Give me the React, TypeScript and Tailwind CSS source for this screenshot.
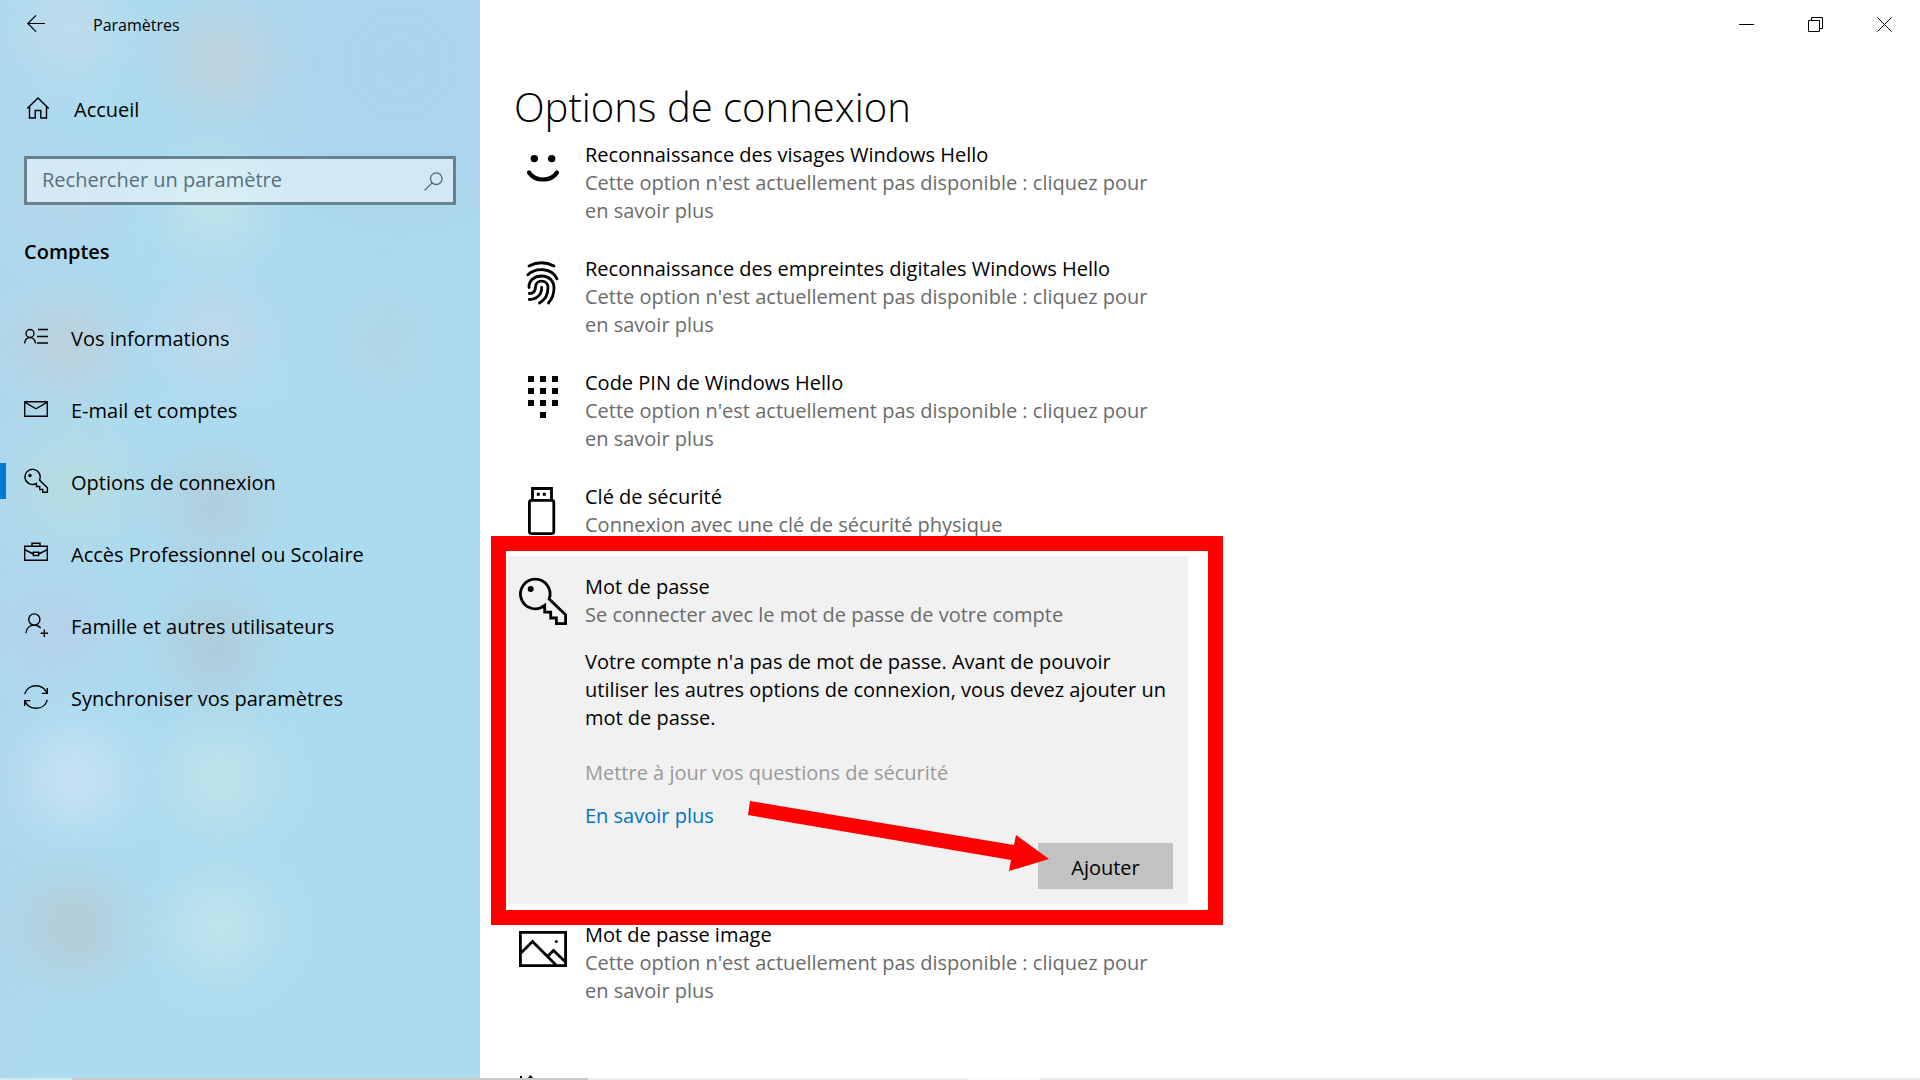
import type { ReactNode } from "react";

type IconProps = { children: ReactNode };

const NavIcon = ({ children }: IconProps) => (
  <svg className="size-6 shrink-0 overflow-visible" viewBox="0 0 24 24" fill="none" stroke="currentColor" strokeWidth="1.4" aria-hidden="true">
    {children}
  </svg>
);

const OptionIcon = ({ children }: IconProps) => (
  <svg className="mt-1 size-12 shrink-0 overflow-visible" viewBox="0 0 48 48" fill="none" stroke="currentColor" strokeWidth="2.8" aria-hidden="true">
    {children}
  </svg>
);

const navItems = [
  {
    label: "Vos informations",
    icon: (
      <>
        <circle cx="6" cy="8.5" r="4" />
        <path d="M.6 18.3C1 15 3 12.6 6 12.6s5 2.4 5.6 5.7M14 4.500h10M13 11.500h11M13 18h11" />
      </>
    ),
  },
  {
    label: "E-mail et comptes",
    icon: <path d="M.7 4.700h22.600v14.600H.7zM.7 5.200l11.300 6.600 11.300-6.600" />,
  },
  {
    label: "Options de connexion",
    selected: true,
    icon: (
      <>
        <path d="M12.500 14.400a7.600 7.600 0 1 1 3-3.400l7.900 7.800v4.500h-4.700v-2.800h-3v-3h-3.200z" />
        <circle cx="6" cy="6.500" r="1" fill="currentColor" />
      </>
    ),
  },
  {
    label: "Accès Professionnel ou Scolaire",
    icon: <path d="M.7 5.300h22.600v14H.7zM8 5V2.300h8V5M.7 8.700 9.300 13M23.300 8.700 14.700 13M9.300 11.300h5.400v3.200H9.300z" />,
  },
  {
    label: "Famille et autres utilisateurs",
    icon: (
      <>
        <circle cx="10.3" cy="6.5" r="5.6" />
        <path d="M1.800 20.100c.7-4.800 4-8 8.500-8 2.700 0 4.900 1.100 6.400 3M20.300 16.600V24M16.600 20.300H24" />
      </>
    ),
  },
  {
    label: "Synchroniser vos paramètres",
    icon: (
      <path d="M.7 9.200C2 4 6.500.7 12 .7c4.700 0 9 2.700 11 7.300M23.300 3v5.400h-5.500M23.300 14.800c-1.300 5.200-5.800 8.500-11.300 8.500-4.700 0-9-2.700-11-7.300M.7 21v-5.400h5.500" />
    ),
  },
];

const unavailable = "Cette option n'est actuellement pas disponible : cliquez pour en savoir plus";

const options = [
  {
    title: "Reconnaissance des visages Windows Hello",
    text: unavailable,
    icon: (
      <>
        <circle cx="15.3" cy="13.6" r="3.7" fill="currentColor" stroke="none" />
        <circle cx="32.7" cy="13.6" r="3.7" fill="currentColor" stroke="none" />
        <path d="M10 27.500c3 4.600 8 7 14 7s11-2.400 14-7" strokeWidth="4.200" strokeLinecap="round" />
      </>
    ),
  },
  {
    title: "Reconnaissance des empreintes digitales Windows Hello",
    text: unavailable,
    icon: (
      <path
        strokeLinecap="round"
        d="M10 7c8-4.200 17-4.200 25 0M8.800 15.800c8-7.500 24-7.300 29.200 4M10 28.500C9.600 21.500 15.500 17 22.500 17 30 17 35 22 35 29c0 6-2 11-5.500 15M10.300 34.500c4.200 0 6.200-2.500 6.200-6.500 0-3.600 2.600-5.800 6-5.800 4 0 6.500 2.500 6.500 6.600C29 35.500 26 41 20.500 44M10.300 40.500C17.500 40.500 22.700 36 22.700 28.500"
      />
    ),
  },
  {
    title: "Code PIN de Windows Hello",
    text: unavailable,
    icon: (
      <path
        fill="currentColor"
        stroke="none"
        d="M9 3h6v6H9zM21 3h6v6h-6zM33 3h6v6h-6zM9 15h6v6H9zM21 15h6v6h-6zM33 15h6v6h-6zM9 27h6v6H9zM21 27h6v6h-6zM33 27h6v6h-6zM21 39h6v6h-6z"
      />
    ),
  },
  {
    title: "Clé de sécurité",
    text: "Connexion avec une clé de sécurité physique",
    icon: (
      <>
        <path d="M13.500 13V1.500h19V13" />
        <rect x="10.400" y="13.400" width="24.400" height="33.200" rx="2" />
        <path d="M17.800 5.800h3v3h-3zM23.800 5.800h3v3h-3z" fill="currentColor" stroke="none" />
      </>
    ),
  },
];

function Option({ title, text, icon }: { title: string; text: string; icon: ReactNode }) {
  return (
    <button type="button" className="flex min-h-[90px] w-full max-w-[681px] items-start gap-[18px] px-3 pt-[17px] pb-[13px] text-left">
      <OptionIcon>{icon}</OptionIcon>
      <span className="flex flex-col">
        <span>{title}</span>
        <span className="text-[#6b6b6b]">{text}</span>
      </span>
    </button>
  );
}

/* Soft colour patches of the desktop that shine through the acrylic panel. */
const glows = [
  "top-[-10px] left-[30px] bg-[#cfdcea]",
  "top-[20px] left-[180px] bg-[#d0d0ce]",
  "top-[165px] left-[175px] bg-[#d0eae6]",
  "top-[160px] left-[30px] bg-[#c0d2e8]",
  "top-[305px] left-[30px] bg-[#cbc8cc]",
  "top-[295px] left-[175px] bg-[#d0d6e8]",
  "top-[445px] left-[35px] bg-[#c4dcd6]",
  "top-[465px] left-[175px] bg-[#b6c4cc]",
  "top-[605px] left-[175px] bg-[#b2c0c8]",
  "top-[590px] left-[25px] bg-[#bccbe6]",
  "top-[738px] left-[35px] bg-[#dfe8f8]",
  "top-[738px] left-[180px] bg-[#d0eae4]",
  "top-[887px] left-[35px] bg-[#bcc0be]",
  "top-[887px] left-[180px] bg-[#d2ece8]",
  "top-[305px] left-[345px] bg-[#b4d2e0]",
];

function Sidebar() {
  return (
    <aside className="relative isolate flex w-1/4 min-w-[420px] flex-col overflow-hidden bg-[#acdbef]">
      <div className="absolute inset-0 -z-10" aria-hidden="true">
        <div className="absolute -top-24 left-60 h-80 w-80 rounded-full bg-[#acd3ec] blur-[60px]" />
        <div className="absolute top-0 -left-16 h-full w-24 bg-[#b0d4ea] opacity-60 blur-[30px]" />
        {glows.map((glow) => (
          <div key={glow} className={`absolute size-20 rounded-full opacity-80 blur-[30px] ${glow}`} />
        ))}
      </div>

      <header className="flex h-12 items-center">
        <button type="button" aria-label="Retour" className="flex h-12 w-[72px] items-center justify-center">
          <svg className="size-[18px] overflow-visible" viewBox="0 0 18 18" fill="none" stroke="currentColor" strokeWidth="1.2" aria-hidden="true">
            <path d="M18 8.500H.8M9 .3.8 8.500 9 16.700" />
          </svg>
        </button>
        <span className="pt-0.5 pl-[21px] text-base">Paramètres</span>
      </header>

      <a href="#accueil" className="mt-9 flex h-12 items-center gap-6 pl-[26px]">
        <NavIcon>
          <path d="M1.300 12.500 12 2l10.700 10.500M3.500 10.800V22h5.700v-7.500h5.600V22h5.700V10.800" />
        </NavIcon>
        <span className="pt-1">Accueil</span>
      </a>

      <div className="relative mx-6 mt-6">
        <input
          type="text"
          aria-label="Rechercher un paramètre"
          placeholder="Rechercher un paramètre"
          className="h-[49px] w-full border-3 border-[#67838f] bg-white/45 pr-12 pb-0.5 pl-[15px] outline-none placeholder:text-[#56707c]"
        />
        <svg className="pointer-events-none absolute top-4 right-[13px] size-[19px]" viewBox="0 0 19 19" fill="none" stroke="#4f6570" strokeWidth="1.3" aria-hidden="true">
          <circle cx="12.300" cy="6.700" r="5.800" />
          <path d="M8.100 10.900.6 18.400" />
        </svg>
      </div>

      <h2 className="mt-[33px] px-6 leading-7 font-semibold">Comptes</h2>

      <nav className="mt-[35px] flex flex-col">
        {navItems.map((item) => (
          <a key={item.label} href="#" aria-current={item.selected ? "page" : undefined} className="relative flex h-[72px] items-center gap-[23px] pl-6">
            {item.selected && <span className="absolute inset-y-[18px] left-0 w-1.5 bg-[#0078d7]" />}
            <NavIcon>{item.icon}</NavIcon>
            <span className="pt-1">{item.label}</span>
          </a>
        ))}
      </nav>
    </aside>
  );
}

function WindowControls() {
  const button = "flex h-12 w-[69px] items-center justify-center";
  const svg = "h-[15px] w-[15px]";
  return (
    <div className="flex h-12 justify-end pr-px">
      <button type="button" aria-label="Réduire" className={button}>
        <svg className={svg} viewBox="0 0 15 15" stroke="currentColor" fill="none">
          <path d="M0 7.500h15" />
        </svg>
      </button>
      <button type="button" aria-label="Restaurer" className={button}>
        <svg className={svg} viewBox="0 0 15 15" stroke="currentColor" fill="none">
          <path d="M.5 3.500h11v11H.5zM3.500 3.500v-3h11v11h-3" />
        </svg>
      </button>
      <button type="button" aria-label="Fermer" className={button}>
        <svg className={svg} viewBox="0 0 15 15" stroke="currentColor" fill="none">
          <path d="m.5.5 14 14M14.500.5l-14 14" />
        </svg>
      </button>
    </div>
  );
}

function PasswordCard() {
  return (
    <section className="relative w-full max-w-[681px] bg-[#f1f1f1]">
      <div className="flex items-start gap-[18px] px-3 pt-[17px]">
        <OptionIcon>
          <path d="M25.700 28.400A14.800 14.800 0 1 1 30.200 22l16.400 15.800v8.800h-9.200V41h-5.700v-5.800h-6z" />
          <circle cx="11.700" cy="12" r="3" fill="currentColor" stroke="none" />
        </OptionIcon>
        <div className="flex flex-col">
          <h2>Mot de passe</h2>
          <p className="text-[#6b6b6b]">Se connecter avec le mot de passe de votre compte</p>
          <p className="mt-[19px] max-w-[590px]">
            Votre compte n'a pas de mot de passe. Avant de pouvoir utiliser les autres options de connexion, vous devez ajouter un mot de passe.
          </p>
          <button type="button" disabled className="mt-[27px] text-left text-[#999]">
            Mettre à jour vos questions de sécurité
          </button>
          <a href="#aide" className="mt-[15px] self-start text-[#0073c4]">
            En savoir plus
          </a>
        </div>
      </div>
      <div className="flex justify-end px-[15px] pt-[13px] pb-[15px]">
        <button type="button" className="h-[46px] w-[135px] bg-[#c2c2c2] pt-1">
          Ajouter
        </button>
      </div>
      <div className="pointer-events-none absolute -top-5 -right-[35px] -bottom-[21px] -left-4 border-15 border-[#fe0000]" />
      <svg className="pointer-events-none absolute top-[244px] left-[240px] h-[72px] w-[304px]" viewBox="0 0 304 72" aria-hidden="true">
        <path fill="#fe0000" d="m3 1 264 44 2-10 33 24-40 12 2-11L1 15z" />
      </svg>
    </section>
  );
}

export default function App() {
  return (
    <div className="relative flex h-screen overflow-hidden bg-white font-['Open_Sans','Noto_Sans',sans-serif] text-[20px] leading-7 text-black">
      <Sidebar />
      <main className="flex min-w-0 flex-1 flex-col">
        <WindowControls />
        <h1 className="pt-[42px] pl-[34px] text-[40px] leading-[34px] font-light">Options de connexion</h1>
        <div className="flex flex-col items-start pr-6 pl-[27px]">
          {options.map((option) => (
            <Option key={option.title} {...option} />
          ))}
          <PasswordCard />
          <Option
            title="Mot de passe image"
            text={unavailable}
            icon={
              <>
                <path d="M1.400 7.400h45.200v33.200H1.400zM1.500 28.500l12-12L37 40M28.500 31.500l6-6L46.500 37" />
                <circle cx="37.300" cy="16.500" r="1.500" fill="currentColor" stroke="none" />
              </>
            }
          />
          <svg className="mt-14 ml-3 size-12 shrink-0" viewBox="0 0 48 48" fill="currentColor" aria-hidden="true">
            <path d="M1 2h2v2H1zM11.500 1l3 3.500h-6z" />
          </svg>
        </div>
      </main>
      <div className="absolute inset-x-0 bottom-0 flex h-0.5">
        <span className="w-[72px] bg-[#d3ebf7]" />
        <span className="w-[516px] bg-[#c9c8c8]" />
        <span className="w-[380px] bg-[#eeeeee]" />
        <span className="w-[72px] bg-[#fafafa]" />
        <span className="flex-1 bg-[#ebebeb]" />
      </div>
    </div>
  );
}
